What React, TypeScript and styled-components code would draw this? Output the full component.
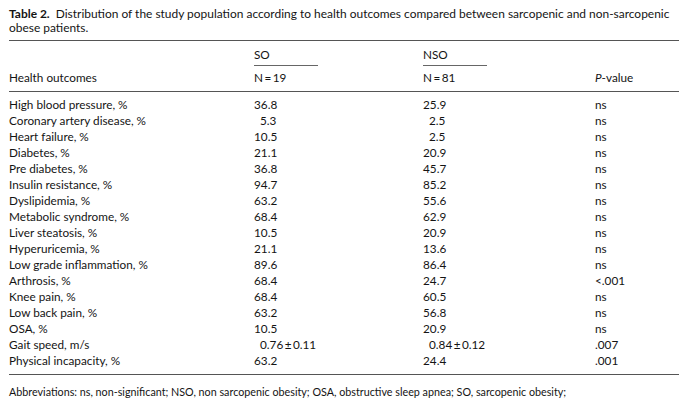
import React from 'react';
import styled, { createGlobalStyle } from 'styled-components';

type Row = {
  label: string;
  so: string;
  nso: string;
  p: string;
  soIndent?: boolean;
  nsoIndent?: boolean;
};

const rows: Row[] = [
  { label: 'High blood pressure, %', so: '36.8', nso: '25.9', p: 'ns' },
  { label: 'Coronary artery disease, %', so: '5.3', nso: '2.5', p: 'ns', soIndent: true, nsoIndent: true },
  { label: 'Heart failure, %', so: '10.5', nso: '2.5', p: 'ns', nsoIndent: true },
  { label: 'Diabetes, %', so: '21.1', nso: '20.9', p: 'ns' },
  { label: 'Pre diabetes, %', so: '36.8', nso: '45.7', p: 'ns' },
  { label: 'Insulin resistance, %', so: '94.7', nso: '85.2', p: 'ns' },
  { label: 'Dyslipidemia, %', so: '63.2', nso: '55.6', p: 'ns' },
  { label: 'Metabolic syndrome, %', so: '68.4', nso: '62.9', p: 'ns' },
  { label: 'Liver steatosis, %', so: '10.5', nso: '20.9', p: 'ns' },
  { label: 'Hyperuricemia, %', so: '21.1', nso: '13.6', p: 'ns' },
  { label: 'Low grade inflammation, %', so: '89.6', nso: '86.4', p: 'ns' },
  { label: 'Arthrosis, %', so: '68.4', nso: '24.7', p: '<.001' },
  { label: 'Knee pain, %', so: '68.4', nso: '60.5', p: 'ns' },
  { label: 'Low back pain, %', so: '63.2', nso: '56.8', p: 'ns' },
  { label: 'OSA, %', so: '10.5', nso: '20.9', p: 'ns' },
  { label: 'Gait speed, m/s', so: '0.76\u2009±\u20090.11', nso: '0.84\u2009±\u20090.12', p: '.007', soIndent: true, nsoIndent: true },
  { label: 'Physical incapacity, %', so: '63.2', nso: '24.4', p: '.001' },
];

function App() {
  return (
    <Page>
      <GlobalStyle />
      <Caption>
        <CaptionLabel>Table 2.</CaptionLabel>&nbsp; Distribution of the study population according to health outcomes compared between sarcopenic and non-sarcopenic
        <br />
        obese patients.
      </Caption>
      <Table>
        <HeadTop>
          <Cell />
          <Cell><GroupLabel>SO</GroupLabel></Cell>
          <Cell><GroupLabel>NSO</GroupLabel></Cell>
          <Cell />
        </HeadTop>
        <HeadBottom>
          <Cell>Health outcomes</Cell>
          <Cell>N&thinsp;=&thinsp;19</Cell>
          <Cell>N&thinsp;=&thinsp;81</Cell>
          <Cell><Italic>P</Italic>-value</Cell>
        </HeadBottom>
        <Body>
          {rows.map((r) => (
            <BodyRow key={r.label}>
              <Cell>{r.label}</Cell>
              <Cell indent={r.soIndent}>{r.so}</Cell>
              <Cell indent={r.nsoIndent}>{r.nso}</Cell>
              <Cell>{r.p}</Cell>
            </BodyRow>
          ))}
        </Body>
      </Table>
      <Footnote>
        Abbreviations: ns, non-significant; NSO, non sarcopenic obesity; OSA, obstructive sleep apnea; SO, sarcopenic obesity;
      </Footnote>
    </Page>
  );
}

const GlobalStyle = createGlobalStyle`
  html, body {
    margin: 0;
    padding: 0;
    background: #ffffff;
  }
  body {
    font-family: Lato, "Open Sans", sans-serif;
    color: #141414;
  }
`;

const Page = styled.div`
  width: 688px;
  height: 405px;
  box-sizing: border-box;
  padding: 7px 9px 0 9px;
  font-size: 11.75px;
  overflow: hidden;
`;

const Caption = styled.div`
  font-size: 11.95px;
  line-height: 14px;
  white-space: nowrap;
`;

const CaptionLabel = styled.span`
  font-weight: 700;
`;

const Table = styled.div`
  margin-top: 5px;
  border-top: 1.5px solid #555;
  border-bottom: 1.5px solid #555;
`;

const columns = `245px 169px 172px 1fr`;

const HeadTop = styled.div`
  display: grid;
  grid-template-columns: ${columns};
  padding-top: 7px;
  line-height: 14px;
`;

const HeadBottom = styled.div`
  display: grid;
  grid-template-columns: ${columns};
  padding: 5px 0 6px 0;
  line-height: 14px;
  border-bottom: 1.5px solid #555;
`;

const GroupLabel = styled.span`
  display: inline-block;
  width: 64px;
  padding-bottom: 3px;
  border-bottom: 1px solid #666;
`;

const Body = styled.div`
  padding: 5px 0 5px 0;
`;

const BodyRow = styled.div`
  display: grid;
  grid-template-columns: ${columns};
  line-height: 16px;
`;

const Cell = styled.div<{ indent?: boolean }>`
  padding-left: ${(p) => (p.indent ? '6px' : '0')};
  white-space: nowrap;
`;

const Italic = styled.span`
  font-style: italic;
`;

const Footnote = styled.div`
  margin-top: 10px;
  font-size: 10.75px;
  line-height: 14px;
`;

export default App;
